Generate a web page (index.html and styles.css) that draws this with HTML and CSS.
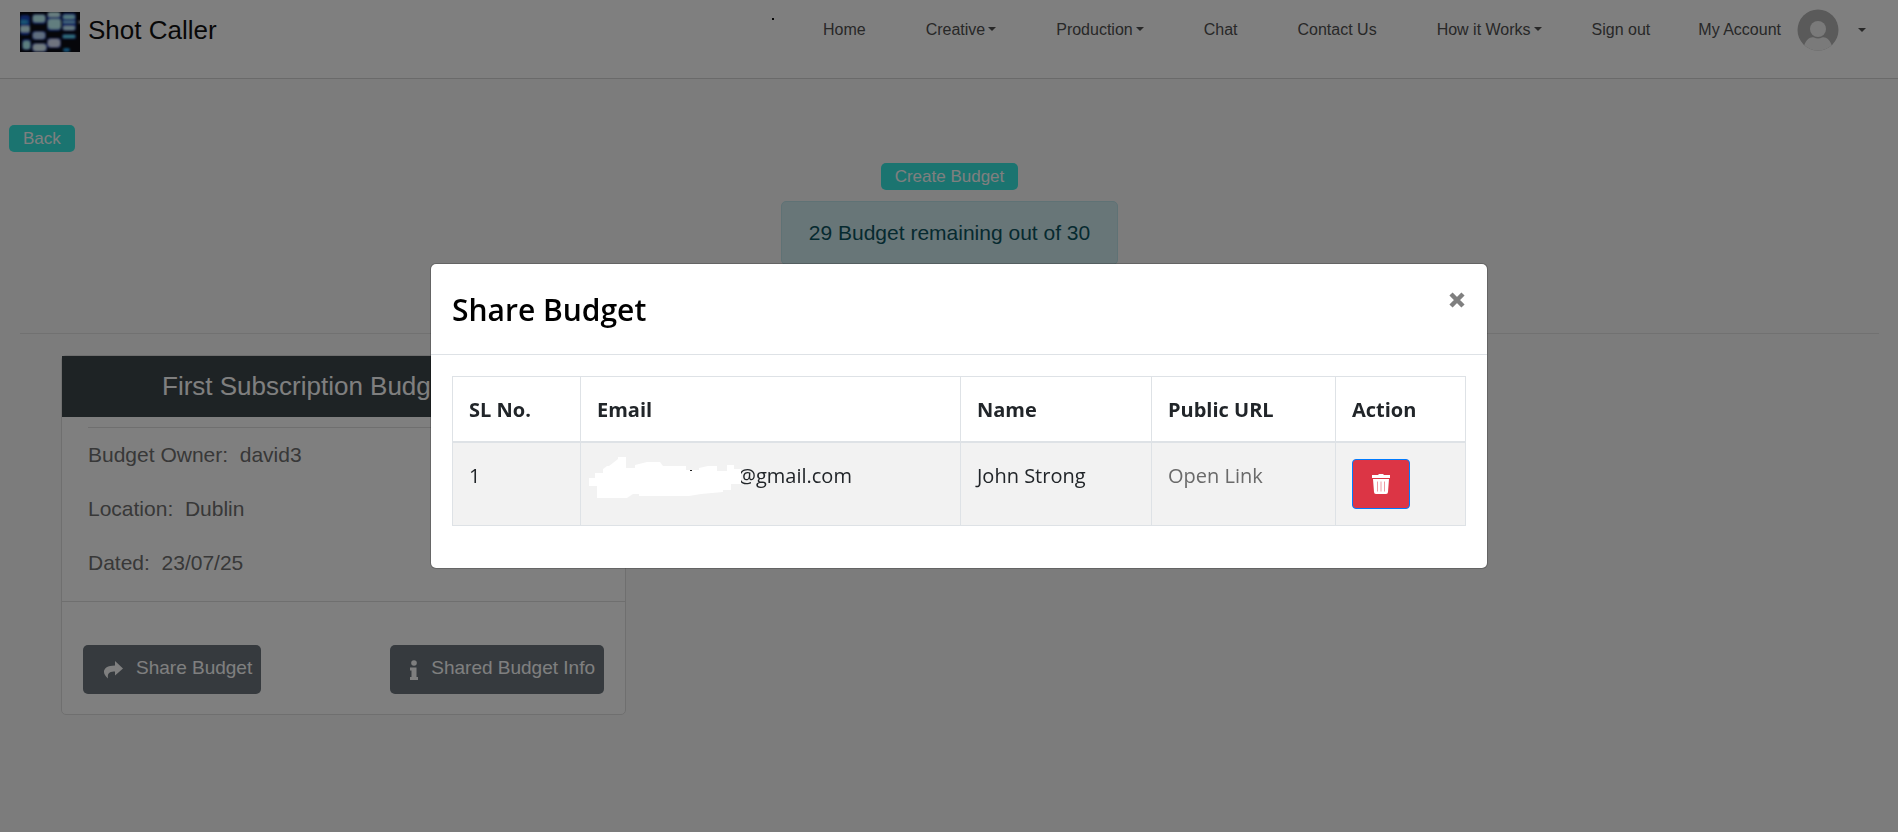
FILE: index.html
```html
<!DOCTYPE html>
<html lang="en">
<head>
<meta charset="utf-8">
<title>Shot Caller</title>
<link rel="stylesheet" href="styles.css">
</head>
<body>
<header class="navbar">
  <a class="brand" href="#">
    <svg class="brand-logo" viewBox="0 0 60 40" aria-hidden="true">
      <defs><filter id="soft" x="-10%" y="-10%" width="120%" height="120%"><feGaussianBlur stdDeviation="0.8"/></filter></defs>
      <rect width="60" height="40" fill="#0c0c14"/>
      <g filter="url(#soft)">
        <g fill="#1a48c0">
          <rect x="0" y="3" width="10" height="20" rx="3"/>
          <rect x="2" y="27" width="9" height="11" rx="3"/>
          <rect x="12" y="2" width="14" height="10" rx="3"/>
          <rect x="12" y="19" width="14" height="9" rx="3"/>
          <rect x="12" y="31" width="15" height="9" rx="3"/>
          <rect x="27" y="0" width="14" height="19" rx="3"/>
          <rect x="27" y="26" width="14" height="10" rx="3"/>
          <rect x="42" y="1" width="14" height="18" rx="3"/>
          <rect x="42" y="22" width="14" height="5" rx="2"/>
        </g>
        <rect x="0" y="8" width="8" height="4" rx="2" fill="#30a8e8"/>
        <rect x="0" y="14" width="10" height="6" rx="2" fill="#d0f8ff"/>
        <rect x="3" y="29" width="7" height="8" rx="2" fill="#b8fcff"/>
        <rect x="13" y="3" width="12" height="7" rx="2" fill="#c4fcff"/>
        <rect x="13" y="20" width="12" height="7" rx="3" fill="#c0dcff"/>
        <rect x="13" y="32" width="13" height="7" rx="3" fill="#e4f8ff"/>
        <rect x="28" y="0" width="12" height="5" rx="2" fill="#d0fcff"/>
        <rect x="28" y="7" width="13" height="10" rx="3" fill="#c4fcff"/>
        <rect x="28" y="27" width="12" height="8" rx="3" fill="#e0e8ff"/>
        <rect x="43" y="3" width="12" height="4" rx="2" fill="#a8f0ff"/>
        <rect x="43" y="9" width="12" height="2" rx="1" fill="#90d8ff"/>
        <rect x="43" y="14" width="12" height="4" rx="2" fill="#c8f0ff"/>
        <rect x="43" y="23" width="12" height="3" rx="1" fill="#60d8f0"/>
        <rect x="43" y="36" width="7" height="4" rx="2" fill="#2898e0"/>
        <circle cx="60" cy="10" r="1.500" fill="#ddd"/>
      </g>
    </svg>
    <span>Shot Caller</span>
  </a>
  <span class="nav-dot" aria-hidden="true"></span>
  <nav class="nav">
    <a href="#">Home</a>
    <a class="dropdown" href="#">Creative</a>
    <a class="dropdown" href="#">Production</a>
    <a href="#">Chat</a>
    <a href="#">Contact Us</a>
    <a class="dropdown" href="#">How it Works</a>
  </nav>
  <nav class="nav nav-account">
    <a href="#">Sign out</a>
    <a class="account dropdown" href="#">My Account
      <svg class="avatar" viewBox="0 0 42 42" aria-hidden="true">
        <defs><clipPath id="round"><circle cx="21" cy="21" r="20.500"/></clipPath></defs>
        <g clip-path="url(#round)">
          <rect width="42" height="42" fill="#b4b4b4"/>
          <circle cx="21" cy="20" r="8" fill="#f4f4f4"/>
          <path d="M7 37C9 31 13 27.500 17 28.500Q21 30.500 25 28.500C29 27.500 33 31 35 37V42H7Z" fill="#f4f4f4"/>
        </g>
      </svg>
    </a>
  </nav>
</header>

<main class="page">
  <button class="btn-teal" type="button">Back</button>
  <section class="summary">
    <button class="btn-teal" type="button">Create Budget</button>
    <div class="alert">29 Budget remaining out of 30</div>
  </section>
  <hr class="divider">
  <article class="card">
    <h2 class="card-title">First Subscription Budget</h2>
    <div class="card-body">
      <p>Budget Owner:&nbsp; david3</p>
      <p>Location:&nbsp; Dublin</p>
      <p>Dated:&nbsp; 23/07/25</p>
    </div>
    <footer class="card-footer">
      <button class="btn-gray" type="button">
        <svg class="icon-share" viewBox="0 0 20 18" aria-hidden="true"><path d="M12 0L20 7.500L12 14.500V10.500C7 10.500 4 12 5 17.500C-2 12 0 4.500 12 4.500Z" fill="currentColor"/></svg>
        Share Budget
      </button>
      <button class="btn-gray" type="button">
        <svg class="icon-info" viewBox="0 0 8 20" aria-hidden="true"><circle cx="4" cy="3" r="2.800" fill="currentColor"/><path d="M0 7.500H6.500V17H8V20H0V17H1.500V10.500H0Z" fill="currentColor"/></svg>
        Shared Budget Info
      </button>
    </footer>
  </article>
</main>

<div class="backdrop">
  <section class="modal" role="dialog" aria-labelledby="modal-title">
    <header class="modal-header">
      <h1 id="modal-title">Share Budget</h1>
      <button class="close" type="button" aria-label="Close">
        <svg viewBox="0 0 16 16" aria-hidden="true"><path d="M2 2L14 14M14 2L2 14" stroke="currentColor" stroke-width="4.500"/></svg>
      </button>
    </header>
    <div class="modal-body">
      <table class="table">
        <colgroup><col class="c-no"><col class="c-email"><col class="c-name"><col class="c-url"><col class="c-action"></colgroup>
        <thead>
          <tr><th>SL No.</th><th>Email</th><th>Name</th><th>Public URL</th><th>Action</th></tr>
        </thead>
        <tbody>
          <tr>
            <td>1</td>
            <td><span class="email">@gmail.com
              <svg class="redaction" viewBox="0 0 152 42" aria-hidden="true"><path d="M0 21H6V16H14V12L18 9H20L29 2V0H37V11H46V8L58 5H71L74 9H97V13H110V11L119 9H128V14H138V8H145V12H152V27H142V33H134V35L112 37L100 39H50V37H44L38 41H8V29H0Z" fill="#fff"/><rect x="101" y="13" width="2" height="1" fill="#222"/></svg>
            </span></td>
            <td>John Strong</td>
            <td><a class="link" href="#">Open Link</a></td>
            <td class="action">
              <button class="btn-delete" type="button" aria-label="Delete">
                <svg viewBox="0 0 18 20" aria-hidden="true"><path d="M0 1H6L7 0H11L12 1H18V4H0Z" fill="#fff"/><path d="M1 5H17L16 18Q16 20 14 20H4Q2 20 2 18Z" fill="#fff"/><path d="M5.500 7.500V17.500M9 7.500V17.500M12.500 7.500V17.500" stroke="#ee9aa2"/></svg>
              </button>
            </td>
          </tr>
        </tbody>
      </table>
    </div>
  </section>
</div>
</body>
</html>
```
FILE: styles.css
```css
* { box-sizing: border-box; }

body {
  margin: 0;
  min-height: 100vh;
  background: #f9f9f9;
  font: 21px/32px "Liberation Sans", Arial, sans-serif;
  color: #707070;
}

a { color: inherit; text-decoration: none; }
button { font-family: inherit; cursor: pointer; }

.navbar {
  display: flex;
  align-items: flex-start;
  padding: 10px 32px 26px 20px;
  border-bottom: 1px solid #d4d4d4;
  background: #fff;
}
.brand {
  display: flex;
  align-items: flex-start;
  gap: 8px;
  margin-right: auto;
  padding-top: 2px;
  font-size: 26px;
  line-height: 36px;
  color: #111;
}
.brand-logo { width: 60px; height: 40px; }
.nav-dot { width: 2px; height: 2px; margin: 8px 49px 0 0; background: #111; }
.nav {
  display: flex;
  align-items: center;
  gap: 60px;
  height: 40px;
  font-size: 16px;
  line-height: 24px;
  color: #505050;
}
.nav-account { gap: 48px; margin-left: 50px; }
.dropdown::after {
  content: "";
  display: inline-block;
  margin-left: 3px;
  vertical-align: 4px;
  border: 4px solid transparent;
  border-top-color: currentColor;
  border-bottom: 0;
}
.account { display: flex; align-items: center; gap: 16px; }
.avatar { width: 42px; height: 42px; }

.page { padding: 46px 8px 40px 9px; }
.btn-teal {
  display: block;
  height: 27px;
  padding: 0 14px;
  border: 0;
  border-radius: 5px;
  background: #36e8e0;
  color: #fff;
  font-size: 17px;
  line-height: 26px;
}
.summary {
  display: flex;
  flex-direction: column;
  align-items: center;
  gap: 11px;
  margin-top: 11px;
}
.alert {
  padding: 15px 27px;
  border: 1px solid #bee5eb;
  border-radius: 5px;
  background: #d1ecf1;
  color: #0c5460;
}
.divider { margin: 68px 11px 0; border: 0; border-top: 1px solid #e2e2e2; }

.card {
  width: 30%;
  min-width: 565px;
  margin: 21px 52px 0;
  border: 1px solid #dfdfdf;
  border-radius: 5px;
  background: #fff;
}
.card-title {
  margin: 0;
  padding: 14px 20px 15px 100px;
  background: #3c464a;
  color: #fff;
  font-size: 26px;
  font-weight: 400;
  line-height: 32px;
}
.card-body { margin: 10px 26px 20px; border-top: 1px solid #dfdfdf; }
.card-body p { margin: 11px 0 22px; }
.card-footer {
  display: flex;
  justify-content: space-between;
  padding: 43px 21px 20px;
  border-top: 1px solid #dfdfdf;
}
.btn-gray {
  display: flex;
  align-items: center;
  height: 49px;
  padding: 0 9px 3px 20px;
  border: 0;
  border-radius: 5px;
  background: #6c757d;
  color: #fff;
  font-size: 19px;
}
.icon-share { width: 20px; height: 18px; margin: 4px 13px 0 0; }
.icon-info { width: 8px; height: 20px; margin: 4px 13px 0 0; }

.backdrop {
  position: fixed;
  inset: 0;
  display: flex;
  align-items: flex-start;
  justify-content: center;
  padding: 263px 0 0 20px;
  background: rgba(0, 0, 0, 0.5);
}
.modal {
  width: 56%;
  min-width: 1058px;
  border: 1px solid rgba(0, 0, 0, 0.2);
  border-radius: 6px;
  background: #fff;
  background-clip: padding-box;
  font-family: "Open Sans", "Noto Sans", sans-serif;
  font-size: 20px;
  color: #212529;
}
.modal-header {
  display: flex;
  align-items: flex-start;
  justify-content: space-between;
  padding: 21px 22px 20px 21px;
  border-bottom: 1px solid #dee2e6;
}
.modal-header h1 {
  margin: 0;
  color: #000;
  font-size: 30px;
  font-weight: 600;
  line-height: 49px;
}
.close { margin-top: 7px; padding: 0; border: 0; background: none; color: #7f7f7f; line-height: 0; }
.close svg { width: 16px; height: 16px; }
.modal-body { padding: 21px 21px 42px; }
.table {
  width: 100%;
  border-collapse: collapse;
  table-layout: fixed;
}
.table th,
.table td {
  padding: 17px 16px 15px;
  border: 1px solid #dee2e6;
  text-align: left;
  vertical-align: top;
}
.table th { border-bottom-width: 2px; font-weight: 700; }
.table td { background: #f2f2f2; }
.table .action { padding: 16px; }
.c-no { width: 128px; }
.c-email { width: 380px; }
.c-name { width: 191px; }
.c-url { width: 184px; }
.email { position: relative; display: block; padding-left: 141px; }
.redaction { position: absolute; top: -3px; left: -8px; width: 152px; height: 42px; }
.link { color: #6a6a6a; }
.btn-delete {
  display: flex;
  align-items: center;
  justify-content: center;
  width: 58px;
  height: 50px;
  padding: 0;
  border: 1px solid #007bff;
  border-radius: 4px;
  background: #dc3545;
}
.btn-delete svg { width: 18px; height: 20px; }
```
